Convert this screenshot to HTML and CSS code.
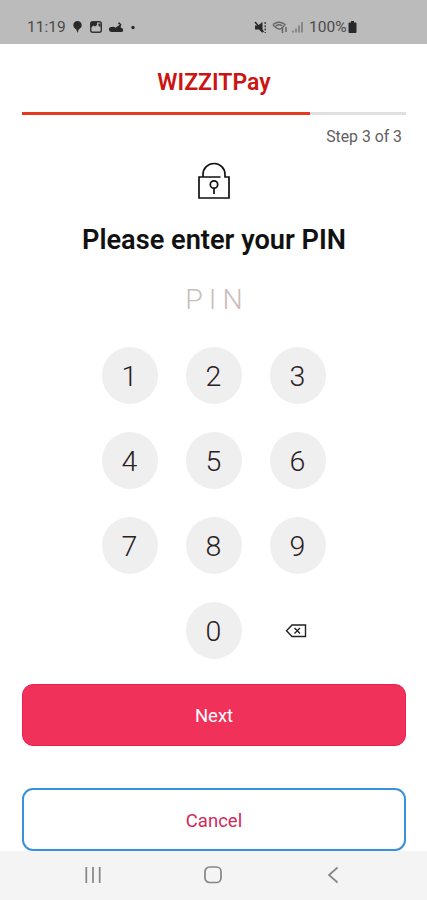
FILE: index.html
```html
<!DOCTYPE html>
<html lang="en">
<head>
  <meta charset="UTF-8">
  <meta name="viewport" content="width=device-width, initial-scale=1.0">
  <title>WIZZITPay</title>
  <link rel="stylesheet" href="styles.css">
</head>
<body>
  <header class="status-bar">
    <span class="time">11:19</span>
    <svg class="status-left" width="64" height="16" viewBox="0 0 64 16" fill="#292929">
      <path d="M5.500 2a4.200 4.200 0 0 1 4.200 4.200c0 2-1.700 3.300-3 4.300L5.500 14l-1.200-3.500c-1.300-1-3-2.300-3-4.300A4.200 4.200 0 0 1 5.500 2z"/>
      <rect x="18.700" y="2.700" width="10.600" height="10.600" rx="2" fill="none" stroke="#333" stroke-width="1.400"/>
      <path d="M19 3h6v3l-2 1.500L21.500 6.500 19 8.500zM26.500 4.500h2V8l-2-1z"/>
      <path d="M39.500 13a2.500 2.500 0 0 1-.2-5q2.500-1 4.200.7L48 5.500l-2-.5 1-2 2.500 2.500Q48 8 49.300 9a2 2 0 0 1-.3 4z"/>
      <circle cx="61" cy="8.500" r="1.700"/>
    </svg>
    <svg class="status-right" width="52" height="16" viewBox="0 0 52 16">
      <path d="M1 6.500h3L8.500 3v11L5 10.500H1z" fill="#292929"/>
      <path d="M1 3l8.500 10" stroke="#292929" stroke-width="1.500"/>
      <path d="M11.200 3v11" stroke="#333" stroke-width="1.300" stroke-dasharray="2 1.300"/>
      <g fill="none" stroke="#666" stroke-width="1.300">
        <path d="M19 5.500q6-4.500 12 0q-1 2.500-4.500 4.500h-2Q20 8 19 5.500M21.700 7q3.300-2.500 6.600 0"/>
        <path d="M28.500 9v5M32 8v5" stroke-width="1.500"/>
      </g>
      <path d="M39 13.500v-2M42 13.500V9.500M45 13.500V6.500M48 13.500V3" stroke="#858585" stroke-width="1.900"/>
    </svg>
    <span class="percent">100%</span>
    <svg class="battery" width="9" height="14" viewBox="0 0 9 14" fill="#292929">
      <path d="M3 1h3v1.500h1.500q1 0 1 1V12q0 1-1 1h-6q-1 0-1-1V3.500q0-1 1-1H3z"/>
    </svg>
  </header>

  <main class="screen">
    <h1 class="brand">WIZZITPay</h1>
    <div class="progress"><div class="progress-fill"></div></div>
    <p class="step">Step 3 of 3</p>

    <svg class="lock" width="34" height="38" viewBox="0 0 34 38" fill="none" stroke="#111" stroke-width="1.700">
      <path d="M23.500 15H2v21h30V15h-4V12.500a11 11 0 0 0-22 0V15"/>
      <circle cx="17" cy="22.500" r="3.700"/>
      <path d="M17 26v6"/>
    </svg>

    <h2 class="prompt">Please enter your PIN</h2>
    <div class="pin">PIN</div>

    <div class="keypad">
      <button class="key">1</button>
      <button class="key">2</button>
      <button class="key">3</button>
      <button class="key">4</button>
      <button class="key">5</button>
      <button class="key">6</button>
      <button class="key">7</button>
      <button class="key">8</button>
      <button class="key">9</button>
      <button class="key zero">0</button>
      <button class="key backspace" aria-label="Delete">
        <svg width="22" height="14" viewBox="0 0 22 14" fill="none" stroke="#222" stroke-width="1.400">
          <path d="M7 1h13.500v11.500H7L1.500 6.750z"/>
          <path d="M9.500 4l5.500 5.500M15 4L9.500 9.500"/>
        </svg>
      </button>
    </div>

    <button class="btn next">Next</button>
    <button class="btn cancel">Cancel</button>
  </main>

  <nav class="nav-bar">
    <svg width="18" height="18" viewBox="0 0 18 18" stroke="#858585" stroke-width="1.700">
      <path d="M2.300 1v16M9 1v16M15.700 1v16"/>
    </svg>
    <svg width="18" height="18" viewBox="0 0 18 18" fill="none" stroke="#858585" stroke-width="1.700">
      <rect x="1" y="1" width="16" height="15.500" rx="4.500"/>
    </svg>
    <svg width="18" height="18" viewBox="0 0 18 18" fill="none" stroke="#858585" stroke-width="1.700">
      <path d="M13.500 1.500L5 9l8.500 7.500"/>
    </svg>
  </nav>
</body>
</html>
```

FILE: styles.css
```css
* {
  box-sizing: border-box;
}

body {
  font-family: Roboto, sans-serif;
  margin: 0;
  height: 900px;
  display: flex;
  flex-direction: column;
  background: #fff;
  color: #111;
  overflow: hidden;
}

h1, h2, p {
  margin: 0;
}

button {
  font-family: inherit;
  padding: 0;
  border: none;
  cursor: pointer;
}

.status-bar {
  height: 44px;
  display: flex;
  align-items: center;
  padding: 10px 0 0 27px;
  background: #bbb;
  color: #4a4a4a;
  font-size: 15.5px;
}

.time {
  width: 45px;
}

.status-left {
  margin-right: 118px;
}

.percent {
  width: 38px;
  margin-left: 3px;
}

.battery {
  margin-left: 1px;
}

.screen {
  height: 807px;
  display: flex;
  flex-direction: column;
  align-items: center;
  padding: 25px 21px 0 22px;
}

.brand {
  font-size: 23px;
  line-height: 28px;
  font-weight: 600;
  color: #cb1512;
}

.progress {
  width: 100%;
  height: 3px;
  margin-top: 15px;
  background: #e0e0e0;
}

.progress-fill {
  width: 75%;
  height: 100%;
  background: #e63a20;
}

.step {
  align-self: flex-end;
  margin: 12px 4px 0 0;
  font-size: 15.8px;
  line-height: 20px;
  color: #606060;
}

.lock {
  margin-top: 15px;
}

.prompt {
  margin-top: 23px;
  font-size: 27.2px;
  line-height: 34px;
  font-weight: 600;
}

.pin {
  margin-top: 26px;
  font-size: 28.5px;
  line-height: 34px;
  font-weight: 300;
  letter-spacing: 6px;
  padding-left: 6px;
  color: #cdbcbc;
}

.keypad {
  display: grid;
  grid-template-columns: repeat(3, 56px);
  gap: 28px;
  margin-top: 30px;
}

.key {
  height: 57px;
  border-radius: 50%;
  padding: 1px 1px 0 0;
  background: #efefef;
  color: #2b2022;
  font-size: 28.5px;
  font-weight: 300;
}

.zero {
  grid-column: 2;
}

.backspace {
  display: flex;
  align-items: center;
  justify-content: center;
  padding-right: 4px;
  background: none;
}

.btn {
  width: 100%;
  height: 62px;
  flex-shrink: 0;
  border-radius: 11px;
  padding-top: 2px;
  font-size: 18.5px;
}

.next {
  margin-top: 25px;
  border: 1px solid #e91f50;
  background: #f0325b;
  color: #fff;
}

.cancel {
  height: 63px;
  margin-top: 42px;
  border: 2px solid #3a91db;
  background: #fff;
  color: #cf2a59;
}

.nav-bar {
  height: 49px;
  display: flex;
  align-items: flex-start;
  justify-content: center;
  gap: 102px;
  padding: 15px 1px 0 0;
  background: #f4f4f4;
}
```
